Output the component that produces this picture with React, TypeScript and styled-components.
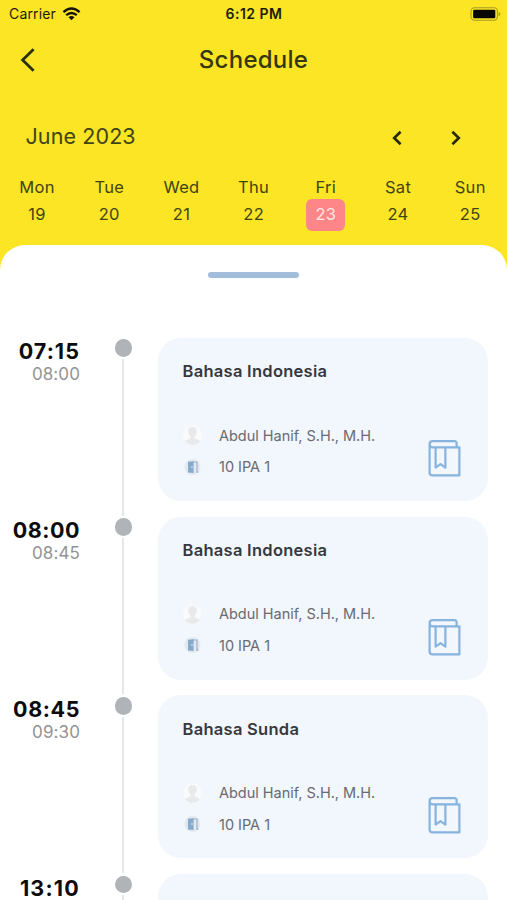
import React from "react";
import styled, { createGlobalStyle } from "styled-components";

const GlobalStyle = createGlobalStyle`
  * { box-sizing: border-box; }
  body {
    margin: 0;
    background: #fbe525;
    font-family: Inter, "Liberation Sans", sans-serif;
  }
`;

const Screen = styled.div`
  width: 507px;
  height: 900px;
  overflow: hidden;
  display: flex;
  flex-direction: column;
  background: #fbe525;
`;

const StatusBar = styled.div`
  height: 27px;
  flex: none;
  display: grid;
  grid-template-columns: 1fr auto 1fr;
  align-items: center;
  padding: 0 6px 0 9px;
  color: #1c1c0c;
`;

const Carrier = styled.div`
  display: flex;
  align-items: center;
  gap: 6px;
  font-size: 14px;
  letter-spacing: 0.15px;
`;

const Clock = styled.div`
  font-size: 14px;
  font-weight: 600;
  letter-spacing: 0.5px;
  margin-right: 2px;
`;

const Battery = styled.div`
  display: flex;
  justify-content: flex-end;
`;

const TitleBar = styled.header`
  height: 65px;
  flex: none;
  display: grid;
  grid-template-columns: 60px 1fr 60px;
  align-items: center;
`;

const BackButton = styled.button`
  border: 0;
  padding: 0 0 0 20px;
  background: none;
  display: flex;
`;

const Title = styled.h1`
  margin: 0;
  text-align: center;
  font-size: 24px;
  line-height: 30px;
  font-weight: 500;
  letter-spacing: 0.25px;
  color: #34370f;
`;

const MonthBar = styled.div`
  height: 56px;
  margin-top: 16px;
  flex: none;
  display: flex;
  align-items: center;
  justify-content: space-between;
  padding: 0 45px 0 25.5px;
`;

const Month = styled.div`
  font-size: 21.5px;
  letter-spacing: 0.1px;
  color: #414414;
`;

const MonthNav = styled.div`
  display: flex;
  gap: 47px;
  padding-top: 3px;
`;

const NavButton = styled.button`
  border: 0;
  padding: 0;
  background: none;
  display: flex;
`;

const Week = styled.div`
  height: 81px;
  flex: none;
  display: grid;
  grid-template-columns: repeat(7, 72.2px);
  padding: 12px 0 0 1px;
`;

const Day = styled.div`
  display: flex;
  flex-direction: column;
  align-items: center;
  font-size: 16.5px;
  letter-spacing: 0.3px;
  line-height: 22px;
  color: #414414;
`;

const DayNumber = styled.div<{ $active?: boolean }>`
  width: 39px;
  height: 32px;
  margin-top: 1px;
  border-radius: 6px;
  line-height: 31px;
  text-align: center;
  background: ${(p) => (p.$active ? "#fe8588" : "transparent")};
  color: ${(p) => (p.$active ? "#ffe9e6" : "inherit")};
`;

const Sheet = styled.main`
  flex: 1;
  min-height: 0;
  overflow: hidden;
  background: #fff;
  border-radius: 25px 25px 0 0;
  display: flex;
  flex-direction: column;
`;

const Handle = styled.div`
  width: 91px;
  height: 6px;
  flex: none;
  margin: 27px auto 59.8px;
  border-radius: 3px;
  background: #a1bddb;
`;

const Lesson = styled.section`
  height: 178.8px;
  flex: none;
  display: grid;
  grid-template-columns: 80px 78px 1fr;
  padding-right: 19px;
`;

const Times = styled.div`
  display: flex;
  flex-direction: column;
  align-items: flex-end;
  padding-top: 0.5px;
`;

const StartTime = styled.div<{ $tracking: number }>`
  font-size: 21.5px;
  line-height: 26px;
  font-weight: 700;
  letter-spacing: ${(p) => p.$tracking}px;
  color: #0c0c0e;
`;

const EndTime = styled.div`
  font-size: 17px;
  line-height: 20px;
  letter-spacing: 0.1px;
  color: #929395;
`;

const Rail = styled.div`
  display: flex;
  flex-direction: column;
  align-items: center;
  padding: 1.6px 0 0 8.6px;
`;

const Dot = styled.div`
  width: 17.6px;
  height: 17.6px;
  flex: none;
  border-radius: 50%;
  background: #b0b4b9;
`;

const Line = styled.div`
  width: 2.4px;
  flex: 1;
  margin: 2px 0 1px;
  background: #e6e7e9;
`;

const Card = styled.article`
  height: 163px;
  border-radius: 23px;
  background: #f2f6fd;
  padding: 22.5px 27px 22px 24.5px;
  display: flex;
  flex-direction: column;
  justify-content: space-between;
`;

const Subject = styled.h2`
  margin: 0;
  font-size: 16.5px;
  line-height: 22px;
  font-weight: 600;
  letter-spacing: 0.28px;
  color: #36383d;
`;

const CardFoot = styled.div`
  display: flex;
  align-items: flex-end;
  justify-content: space-between;
`;

const Details = styled.div`
  margin-bottom: -3.5px;
`;

const Detail = styled.div`
  display: grid;
  grid-template-columns: 36.5px auto;
  align-items: center;
  height: 31.5px;
  font-size: 14.5px;
  letter-spacing: -0.02px;
  color: #696b70;
`;

const WifiIcon = () => (
  <svg width="19" height="14" viewBox="0 0 19 14" fill="none" stroke="#14140a" strokeWidth="2.4">
    <path d="M1.4 5.1Q9.5-1.9 17.6 5.1" />
    <path d="M4.2 8.2Q9.5 3.8 14.8 8.2" />
    <path d="M6.5 10.2Q9.5 8 12.5 10.2L9.5 13.3Z" fill="#14140a" stroke="none" />
  </svg>
);

const BatteryIcon = () => (
  <svg width="31" height="14" viewBox="0 0 31 14">
    <rect x="1" y=".8" width="26.5" height="12.4" rx="3.6" fill="none" stroke="#a89c24" strokeWidth="1.1" />
    <rect x="3.1" y="2.8" width="22.2" height="8.4" rx="1.3" fill="#070703" />
    <path d="M28.7 4.9Q30.5 5.6 30.5 7T28.7 9.1Z" fill="#a89c24" />
  </svg>
);

const BackIcon = () => (
  <svg width="16" height="26" viewBox="0 0 16 26" fill="none" stroke="#2c300f" strokeWidth="2.8">
    <path d="M13.6 2.2L2.6 13L13.6 23.8" />
  </svg>
);

const Chevron = ({ next = false }: { next?: boolean }) => (
  <svg width="12" height="16" viewBox="0 0 12 16" fill="none" stroke="#26290e" strokeWidth="2.6">
    <path d={next ? "M2.4 1.8L8.8 8L2.4 14.2" : "M9.6 1.8L3.2 8L9.6 14.2"} />
  </svg>
);

const PersonIcon = () => (
  <svg width="20" height="20" viewBox="0 0 20 20">
    <circle cx="9.5" cy="10" r="9.5" fill="#fafafb" />
    <path
      d="M9.5 2C6.4 2 5 4 5.2 6.7C5.3 9 6.5 10.6 7.6 11.6V13.2C6 14.4 3.2 14.6 2 16A9.5 9.5 0 0 0 17 16C15.8 14.6 13 14.4 11.4 13.2V11.6C12.5 10.6 13.7 9 13.8 6.7C14 4 12.6 2 9.5 2Z"
      fill="#e8e9ea"
    />
  </svg>
);

const DoorIcon = () => (
  <svg width="20" height="18" viewBox="0 0 20 18">
    <circle cx="9.5" cy="9" r="8" fill="#e4e9ed" />
    <path d="M9 4H14V14.2H15.5" fill="none" stroke="#9bb2c8" strokeWidth="1.2" />
    <path d="M5 3.8L10.6 3.2V15L5 14.4Z" fill="#84abcd" />
    <circle cx="9" cy="9" r=".8" fill="#e7f1fa" />
  </svg>
);

const BookIcon = () => (
  <svg width="33" height="39" viewBox="0 0 33 39" fill="none" stroke="#86b4de" strokeWidth="2.2" strokeLinejoin="round">
    <path d="M28.6 7.3V3.1Q28.6 1.2 26.6 1.2H4.7Q1.6 1.2 1.6 4.2Q1.6 7.3 4.7 7.3H31.4V35.4H4.7Q1.6 35.4 1.6 32.4V4.2" />
    <path d="M7.6 7.3V27.6L12.5 24.2L17.4 27.6V7.3" />
  </svg>
);

const days = [
  ["Mon", "19"], ["Tue", "20"], ["Wed", "21"], ["Thu", "22"],
  ["Fri", "23"], ["Sat", "24"], ["Sun", "25"],
];

const lessons = [
  { start: "07:15", end: "08:00", subject: "Bahasa Indonesia", tracking: 1.05 },
  { start: "08:00", end: "08:45", subject: "Bahasa Indonesia", tracking: 0.5 },
  { start: "08:45", end: "09:30", subject: "Bahasa Sunda", tracking: 0.6 },
  { start: "13:10", end: "", subject: "", tracking: 1.2 },
];

export default function App() {
  return (
    <Screen>
      <GlobalStyle />
      <StatusBar>
        <Carrier>Carrier <WifiIcon /></Carrier>
        <Clock>6:12 PM</Clock>
        <Battery><BatteryIcon /></Battery>
      </StatusBar>
      <TitleBar>
        <BackButton aria-label="Back"><BackIcon /></BackButton>
        <Title>Schedule</Title>
      </TitleBar>
      <MonthBar>
        <Month>June 2023</Month>
        <MonthNav>
          <NavButton aria-label="Previous week"><Chevron /></NavButton>
          <NavButton aria-label="Next week"><Chevron next /></NavButton>
        </MonthNav>
      </MonthBar>
      <Week>
        {days.map(([name, num]) => (
          <Day key={num}>
            {name}
            <DayNumber $active={num === "23"}>{num}</DayNumber>
          </Day>
        ))}
      </Week>
      <Sheet>
        <Handle />
        {lessons.map((l) => (
          <Lesson key={l.start}>
            <Times>
              <StartTime $tracking={l.tracking}>{l.start}</StartTime>
              <EndTime>{l.end}</EndTime>
            </Times>
            <Rail><Dot /><Line /></Rail>
            <Card>
              {l.subject && (
                <>
                  <Subject>{l.subject}</Subject>
                  <CardFoot>
                    <Details>
                      <Detail><PersonIcon />Abdul Hanif, S.H., M.H.</Detail>
                      <Detail><DoorIcon />10 IPA 1</Detail>
                    </Details>
                    <BookIcon />
                  </CardFoot>
                </>
              )}
            </Card>
          </Lesson>
        ))}
      </Sheet>
    </Screen>
  );
}
